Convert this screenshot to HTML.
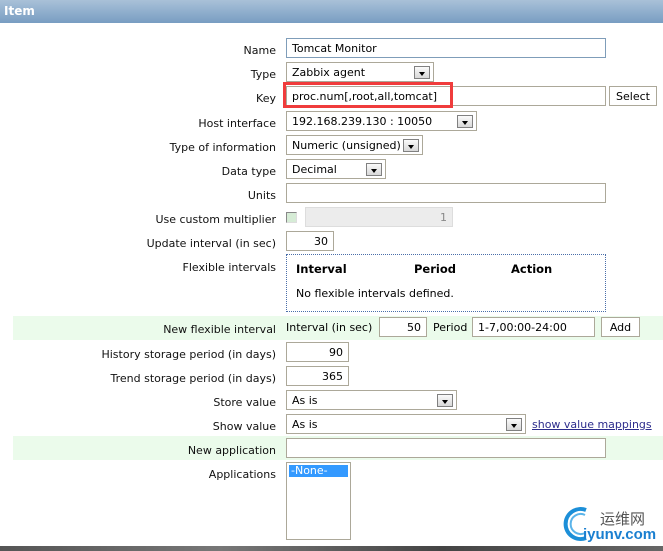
<!DOCTYPE html>
<html><head><meta charset="utf-8"><style>
*{box-sizing:border-box;margin:0;padding:0}
body{width:663px;height:551px;overflow:hidden;background:#fff;position:relative;font-family:"DejaVu Sans","Liberation Sans",sans-serif;font-size:11px;color:#000}
.a{position:absolute}
.hdr{left:0;top:0;width:663px;height:23px;background:linear-gradient(#a9c1d8,#789dc2);color:#fff;font-weight:bold;font-size:12px;padding:4px 0 0 4px;font-family:"DejaVu Sans",sans-serif}
.lbl{position:absolute;right:387px;white-space:nowrap;color:#111;margin-top:1px}
.in{position:absolute;border:1px solid #aca899;background:#fff;height:20px;padding:3px 5px;white-space:nowrap;overflow:hidden;line-height:13px}
.r{text-align:right}
.arr{position:absolute;right:3px;top:3px;width:16px;height:13px;border:1px solid #808080;background:linear-gradient(#fafafa,#d8d8d8)}
.arr:after{content:"";position:absolute;left:4px;top:5px;border-left:3.5px solid transparent;border-right:3.5px solid transparent;border-top:4px solid #000}
.g{position:absolute;left:13px;width:650px;background:#ebfbeb}
.btn{position:absolute;border:1px solid #aca899;background:#fff;height:20px;text-align:center;padding-top:3px;line-height:13px}
</style></head><body>
<div class="a hdr">Item</div>
<div class="g" style="top:316px;height:24px"></div>
<div class="g" style="top:436px;height:24px"></div>

<div class="lbl" style="top:43px">Name</div>
<div class="in" style="left:286px;top:38px;width:320px;border-color:#7f9db9">Tomcat Monitor</div>
<div class="lbl" style="top:67px">Type</div>
<div class="in" style="left:286px;top:62px;width:148px">Zabbix agent<div class="arr"></div></div>
<div class="lbl" style="top:91px">Key</div>
<div class="in" style="left:286px;top:86px;width:320px">proc.num[,root,all,tomcat]</div>
<div class="a" style="left:283px;top:82px;width:170px;height:26px;border:3px solid #f03c3c"></div>
<div class="btn" style="left:609px;top:86px;width:48px">Select</div>
<div class="lbl" style="top:116px">Host interface</div>
<div class="in" style="left:286px;top:111px;width:191px">192.168.239.130 : 10050<div class="arr"></div></div>
<div class="lbl" style="top:140px">Type of information</div>
<div class="in" style="left:286px;top:135px;width:137px">Numeric (unsigned)<div class="arr"></div></div>
<div class="lbl" style="top:164px">Data type</div>
<div class="in" style="left:286px;top:159px;width:100px">Decimal<div class="arr"></div></div>
<div class="lbl" style="top:188px">Units</div>
<div class="in" style="left:286px;top:183px;width:320px"></div>
<div class="lbl" style="top:212px">Use custom multiplier</div>
<div class="a" style="left:286px;top:212px;width:11px;height:11px;border:1px solid #888;border-right-color:#ddd;border-bottom-color:#ddd;background:#d6ecd6"></div>
<div class="in r" style="left:305px;top:207px;width:148px;background:#ececec;border-color:#ddd;color:#888">1</div>
<div class="lbl" style="top:236px">Update interval (in sec)</div>
<div class="in r" style="left:286px;top:231px;width:48px">30</div>
<div class="lbl" style="top:260px">Flexible intervals</div>
<div class="a" style="left:286px;top:254px;width:320px;height:58px;border:1px dotted #4a6ea9"></div>
<div class="a" style="left:296px;top:262px;font-weight:bold;font-size:11.5px">Interval</div>
<div class="a" style="left:414px;top:262px;font-weight:bold;font-size:11.5px">Period</div>
<div class="a" style="left:511px;top:262px;font-weight:bold;font-size:11.5px">Action</div>
<div class="a" style="left:296px;top:287px">No flexible intervals defined.</div>
<div class="lbl" style="top:322px">New flexible interval</div>
<div class="a" style="left:286px;top:321px">Interval (in sec)</div>
<div class="in r" style="left:379px;top:317px;width:48px">50</div>
<div class="a" style="left:433px;top:321px">Period</div>
<div class="in" style="left:472px;top:317px;width:123px">1-7,00:00-24:00</div>
<div class="btn" style="left:601px;top:317px;width:39px">Add</div>
<div class="lbl" style="top:347px">History storage period (in days)</div>
<div class="in r" style="left:286px;top:342px;width:63px">90</div>
<div class="lbl" style="top:371px">Trend storage period (in days)</div>
<div class="in r" style="left:286px;top:366px;width:63px">365</div>
<div class="lbl" style="top:395px">Store value</div>
<div class="in" style="left:286px;top:390px;width:171px">As is<div class="arr"></div></div>
<div class="lbl" style="top:419px">Show value</div>
<div class="in" style="left:286px;top:414px;width:240px">As is<div class="arr"></div></div>
<div class="a" style="left:532px;top:418px;color:#2c2c8c;text-decoration:underline">show value mappings</div>
<div class="lbl" style="top:443px">New application</div>
<div class="in" style="left:286px;top:438px;width:320px"></div>
<div class="lbl" style="top:467px">Applications</div>
<div class="a" style="left:286px;top:462px;width:65px;height:78px;border:1px solid #aca899"></div>
<div class="a" style="left:289px;top:465px;width:59px;height:12px;background:#3399ff;color:#fff;font-size:11px;line-height:12px;padding-left:2px">-None-</div>
<div class="a" style="left:0;top:546px;width:663px;height:5px;background:linear-gradient(90deg,#555,#777,#444,#666)"></div>
<svg class="a" style="left:559px;top:504px" width="36" height="40" viewBox="0 0 36 40"><path d="M27 6 A15 15 0 1 0 27 34" fill="none" stroke="#1c8fd8" stroke-width="4"/><path d="M26 11 A10 10 0 1 0 26 29" fill="none" stroke="#5ab4ea" stroke-width="2"/></svg>
<div class="a" style="left:600px;top:508px;font-family:'Noto Sans CJK SC',sans-serif;font-size:15px;color:#555">运维网</div>
<div class="a" style="left:583px;top:526px;font-family:'Liberation Sans',sans-serif;font-weight:bold;font-size:15px;color:#1a7fd0">iyunv.com</div>
</body></html>
